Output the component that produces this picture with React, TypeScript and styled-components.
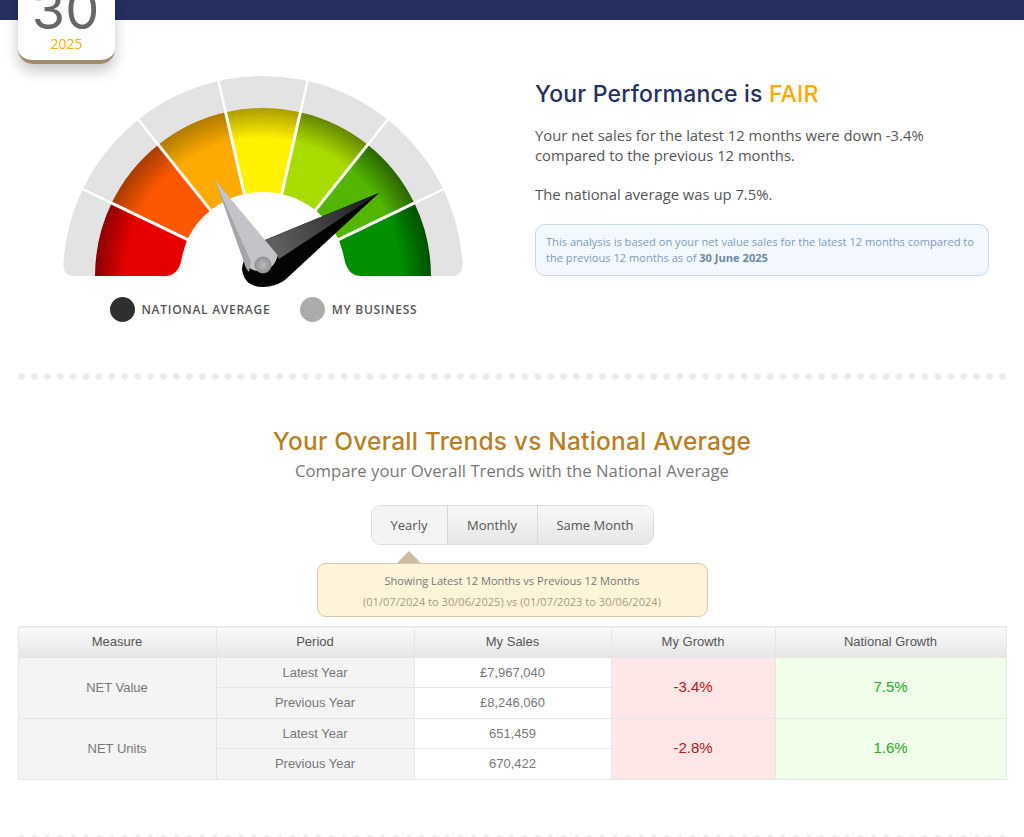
import styled, { createGlobalStyle } from "styled-components";

const GlobalStyle = createGlobalStyle`
  html, body {
    margin: 0;
    padding: 0;
    background: #fff;
    font-family: "Open Sans", "Liberation Sans", sans-serif;
    overflow: hidden;
  }
`;

const CX = 263;
const CY = 276;
const OUTER = 168;
const INNER = 84;
const STEP = 180 / 7;
const SEGMENTS = [
  { main: "#e60000", dark: "#8c0000" },
  { main: "#fd5800", dark: "#a63c00" },
  { main: "#fdaa00", dark: "#b07a00" },
  { main: "#fff200", dark: "#ad9c00" },
  { main: "#a8dc00", dark: "#668500" },
  { main: "#52b500", dark: "#2b6400" },
  { main: "#008f00", dark: "#004f00" },
];

function pt(r: number, deg: number) {
  const a = (deg * Math.PI) / 180;
  return `${(CX - r * Math.cos(a)).toFixed(2)} ${(CY - r * Math.sin(a)).toFixed(2)}`;
}

function ringPath(inner: number, outer: number, from: number, to: number) {
  return `M${pt(inner, from)} L${pt(outer, from)} A${outer} ${outer} 0 0 1 ${pt(outer, to)} L${pt(inner, to)} A${inner} ${inner} 0 0 0 ${pt(inner, from)}Z`;
}

function segmentPath(i: number) {
  // first and last segments flare out at the foot of the gauge
  if (i === 0) {
    return `M95 276 L165 276 Q177 276 181 262 Q183 251 ${pt(INNER, STEP)} L${pt(OUTER, STEP)} A${OUTER} ${OUTER} 0 0 0 95 276Z`;
  }
  if (i === 6) {
    return `M431 276 L361 276 Q349 276 345 262 Q343 251 ${pt(INNER, 180 - STEP)} L${pt(OUTER, 180 - STEP)} A${OUTER} ${OUTER} 0 0 1 431 276Z`;
  }
  return ringPath(INNER, OUTER, i * STEP, (i + 1) * STEP);
}

function Gauge() {
  const dividers = [1, 2, 3, 4, 5, 6];
  return (
    <GaugeSvg viewBox="50 60 430 240" width="430" height="240">
      <defs>
        {SEGMENTS.map((s, i) => (
          <radialGradient key={i} id={`seg${i}`} gradientUnits="userSpaceOnUse" cx={CX} cy={CY} r={OUTER}>
            <stop offset="0.82" stopColor={s.main} />
            <stop offset="1" stopColor={s.dark} />
          </radialGradient>
        ))}
        <linearGradient id="darkNeedle" x1="0" y1="0.6" x2="1" y2="0.2">
          <stop offset="0" stopColor="#5f5f5f" />
          <stop offset="1" stopColor="#1c1c1c" />
        </linearGradient>
        <radialGradient id="hub">
          <stop offset="0" stopColor="#bcbcbf" />
          <stop offset="1" stopColor="#919194" />
        </radialGradient>
      </defs>

      {/* grey outer band */}
      <path
        d={`M75 276 Q63 276 ${pt(200, 3.44)} A200 200 0 0 1 ${pt(200, 176.56)} Q463 276 451 276 L431 276 A${OUTER} ${OUTER} 0 0 0 95 276 Z`}
        fill="#e3e3e3"
      />
      {dividers.map((n) => {
        const [x1, y1] = pt(160, n * STEP).split(" ");
        const [x2, y2] = pt(204, n * STEP).split(" ");
        return <line key={n} x1={x1} y1={y1} x2={x2} y2={y2} stroke="#fff" strokeWidth="2.4" />;
      })}

      {/* coloured segments */}
      {SEGMENTS.map((_, i) => (
        <path key={i} d={segmentPath(i)} fill={`url(#seg${i})`} />
      ))}
      {dividers.map((n) => {
        const [x1, y1] = pt(INNER - 2, n * STEP).split(" ");
        const [x2, y2] = pt(OUTER + 1, n * STEP).split(" ");
        return <line key={n} x1={x1} y1={y1} x2={x2} y2={y2} stroke="#fff" strokeWidth="3" />;
      })}

      {/* national average needle */}
      <path d="M379 193 L265 240 Q243 252 242 269 Q244 287 263 287 Q275 287 285 280 Z" fill="#040404" />
      <path d="M379 193 L265 240 L279 259 Z" fill="url(#darkNeedle)" />

      {/* my business needle */}
      <path d="M215 180 L244 262 A18 18 0 0 0 277.5 255 Z" fill="#c4c4c8" />
      <path d="M215 180 L244 262 Q245 268 249 272 L251 262 Z" fill="#a6a6aa" />
      <circle cx="263" cy="265" r="8.5" fill="url(#hub)" />
    </GaugeSvg>
  );
}

function App() {
  return (
    <Page>
      <GlobalStyle />
      <TopBar />
      <DateCard>
        <DateDay>30</DateDay>
        <DateYear>2025</DateYear>
      </DateCard>

      <Summary>
        <GaugeColumn>
          <Gauge />
          <Legend>
            <LegendItem>
              <LegendDot $color="#2f2f2f" />
              NATIONAL AVERAGE
            </LegendItem>
            <LegendItem>
              <LegendDot $color="#ababab" />
              MY BUSINESS
            </LegendItem>
          </Legend>
        </GaugeColumn>
        <SummaryText>
          <PerformanceTitle>
            Your Performance is <Rating>FAIR</Rating>
          </PerformanceTitle>
          <Lead>
            Your net sales for the latest 12 months were down -3.4%
            <br />
            compared to the previous 12 months.
          </Lead>
          <Lead>The national average was up 7.5%.</Lead>
          <InfoBox>
            This analysis is based on your net value sales for the latest 12 months compared to
            <br />
            the previous 12 months as of <strong>30 June 2025</strong>
          </InfoBox>
        </SummaryText>
      </Summary>

      <DotRule />

      <Trends>
        <TrendsTitle>Your Overall Trends vs National Average</TrendsTitle>
        <TrendsSubtitle>Compare your Overall Trends with the National Average</TrendsSubtitle>
        <Tabs>
          <Tab $active $width={75}>Yearly</Tab>
          <Tab $width={89}>Monthly</Tab>
          <Tab $width={115}>Same Month</Tab>
        </Tabs>
        <Notice>
          <NoticeLine>Showing Latest 12 Months vs Previous 12 Months</NoticeLine>
          <NoticeDates>(01/07/2024 to 30/06/2025) vs (01/07/2023 to 30/06/2024)</NoticeDates>
        </Notice>
        <DataTable>
          <colgroup>
            <col width="198" />
            <col width="198" />
            <col width="197" />
            <col width="164" />
            <col width="231" />
          </colgroup>
          <thead>
            <tr>
              <HeadCell>Measure</HeadCell>
              <HeadCell>Period</HeadCell>
              <HeadCell>My Sales</HeadCell>
              <HeadCell>My Growth</HeadCell>
              <HeadCell>National Growth</HeadCell>
            </tr>
          </thead>
          <tbody>
            <tr>
              <LabelCell rowSpan={2}>NET Value</LabelCell>
              <LabelCell>Latest Year</LabelCell>
              <ValueCell>£7,967,040</ValueCell>
              <GrowthCell rowSpan={2} $good={false}>-3.4%</GrowthCell>
              <GrowthCell rowSpan={2} $good>7.5%</GrowthCell>
            </tr>
            <tr>
              <LabelCell>Previous Year</LabelCell>
              <ValueCell>£8,246,060</ValueCell>
            </tr>
            <tr>
              <LabelCell rowSpan={2}>NET Units</LabelCell>
              <LabelCell>Latest Year</LabelCell>
              <ValueCell>651,459</ValueCell>
              <GrowthCell rowSpan={2} $good={false}>-2.8%</GrowthCell>
              <GrowthCell rowSpan={2} $good>1.6%</GrowthCell>
            </tr>
            <tr>
              <LabelCell>Previous Year</LabelCell>
              <ValueCell>670,422</ValueCell>
            </tr>
          </tbody>
        </DataTable>
      </Trends>

      <DotRule $faint />
    </Page>
  );
}

export default App;

const Page = styled.div`
  position: relative;
  width: 1024px;
  height: 837px;
  overflow: hidden;
  background: #fff;
`;

const TopBar = styled.div`
  height: 20px;
  background: #253060;
`;

const DateCard = styled.div`
  position: absolute;
  top: -15px;
  left: 18px;
  width: 97px;
  height: 79px;
  box-sizing: border-box;
  border-radius: 0 0 15px 15px;
  background: #fff;
  border-bottom: 4px solid #a08c6c;
  box-shadow: 0 7px 14px rgba(0, 0, 0, 0.22);
  text-align: center;
`;

const DateDay = styled.div`
  margin-left: -2px;
  font-family: "Inter", "Open Sans", sans-serif;
  font-size: 54px;
  line-height: 50px;
  color: #666;
`;

const DateYear = styled.div`
  font-size: 14px;
  line-height: 18px;
  color: #fdaa00;
`;

const Summary = styled.section`
  display: flex;
  height: 340px;
`;

const GaugeColumn = styled.div`
  width: 535px;
  flex: none;
`;

const GaugeSvg = styled.svg`
  display: block;
  margin: 40px 0 0 50px;
`;

const Legend = styled.div`
  display: flex;
  gap: 30px;
  margin: -3px 0 0 110px;
`;

const LegendItem = styled.div`
  display: flex;
  align-items: center;
  gap: 6.5px;
  font-size: 12px;
  font-weight: 600;
  letter-spacing: 0.72px;
  color: #555;
`;

const LegendDot = styled.span<{ $color: string }>`
  width: 25px;
  height: 25px;
  border-radius: 50%;
  background: ${(props) => props.$color};
`;

const SummaryText = styled.div`
  width: 454px;
  padding-top: 60px;
`;

const PerformanceTitle = styled.h2`
  margin: 0 0 17px;
  font-family: "Inter", "Open Sans", sans-serif;
  font-size: 23px;
  line-height: 28px;
  font-weight: 500;
  letter-spacing: 0.2px;
  color: #253060;
`;

const Rating = styled.span`
  color: #fdaa00;
`;

const Lead = styled.p`
  margin: 0 0 19px;
  font-size: 14.8px;
  line-height: 20px;
  color: #555;
`;

const InfoBox = styled.div`
  box-sizing: border-box;
  height: 52px;
  margin-top: 20px;
  padding: 9px 10px;
  border: 1px solid #c5d8ec;
  border-radius: 10px;
  background: #f3f8fe;
  font-size: 11.1px;
  line-height: 16px;
  color: #7d9bb8;

  strong {
    color: #6a88a6;
    font-weight: 700;
  }
`;

const DotRule = styled.div<{ $faint?: boolean }>`
  height: 7px;
  margin: ${(props) => (props.$faint ? "55px" : "13px")} 18px 0;
  background: radial-gradient(circle at 3.5px 3.5px, #ebebeb 3.1px, transparent 3.6px) 0 0 / 12.92px 7px repeat-x;
`;

const Trends = styled.section`
  display: flex;
  flex-direction: column;
  align-items: center;
  padding: 46px 18px 0;
`;

const TrendsTitle = styled.h2`
  margin: 0;
  font-family: "Inter", "Open Sans", sans-serif;
  font-size: 24.5px;
  line-height: 30px;
  font-weight: 500;
  letter-spacing: 0.2px;
  color: #b97f25;
`;

const TrendsSubtitle = styled.p`
  margin: 3px 0 0;
  font-size: 16.7px;
  line-height: 24px;
  color: #777;
`;

const Tabs = styled.div`
  display: flex;
  height: 38px;
  margin-top: 22px;
  overflow: hidden;
  border: 1px solid #dcdcdc;
  border-radius: 10px;
`;

const Tab = styled.div<{ $active?: boolean; $width: number }>`
  width: ${(props) => props.$width}px;
  display: flex;
  align-items: center;
  justify-content: center;
  font-size: 13px;
  color: #555;
  background: ${(props) =>
    props.$active ? "#f4f4f4" : "linear-gradient(#f8f8f8, #e6e6e6)"};
  & + & {
    border-left: 1px solid #d9d9d9;
  }
`;

const Notice = styled.div`
  position: relative;
  box-sizing: border-box;
  width: 391px;
  height: 54px;
  margin-top: 18px;
  padding-top: 6px;
  border: 1px solid #d9c7a6;
  border-radius: 9px;
  background: #fff4d9;
  text-align: center;
  font-size: 11.1px;
  line-height: 21px;

  &::before {
    content: "";
    position: absolute;
    top: -13px;
    left: 79px;
    border: 12px solid transparent;
    border-top: 0;
    border-bottom: 12px solid #cdbda3;
  }
`;

const NoticeLine = styled.div`
  color: #777;
`;

const NoticeDates = styled.div`
  color: #a89a80;
`;

const DataTable = styled.table`
  width: 988px;
  margin-top: 9px;
  table-layout: fixed;
  border-collapse: collapse;
  border: 1px solid #e6e6e6;
  font-family: "Liberation Sans", Arial, sans-serif;
  font-size: 13px;
  color: #777;
`;

const HeadCell = styled.th`
  height: 29.5px;
  padding: 0;
  border: 1px solid #e6e6e6;
  background: linear-gradient(#fafafa, #e6e6e6);
  font-weight: 400;
  color: #555;
`;

const LabelCell = styled.td`
  height: 29.5px;
  padding: 0;
  text-align: center;
  border: 1px solid #e6e6e6;
  background: #f4f4f4;
`;

const ValueCell = styled.td`
  height: 29.5px;
  padding: 0;
  text-align: center;
  border: 1px solid #e6e6e6;
  background: #fff;
`;

const GrowthCell = styled.td<{ $good: boolean }>`
  padding: 0 0 2px;
  text-align: center;
  font-size: 15px;
  border: 1px solid #e6e6e6;
  background: ${(props) => (props.$good ? "#f0fde8" : "#ffe7e7")};
  color: ${(props) => (props.$good ? "#22aa22" : "#b01818")};
`;
